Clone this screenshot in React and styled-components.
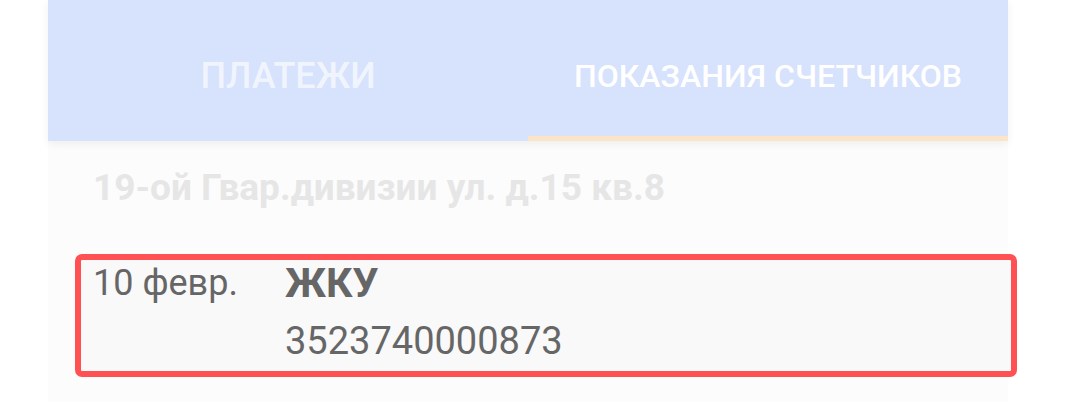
import React from "react";
import styled, { createGlobalStyle } from "styled-components";

const GlobalStyle = createGlobalStyle`
  body {
    margin: 0;
    background: #ffffff;
    font-family: Roboto, "Liberation Sans", sans-serif;
  }
`;

const tabs = [
  { id: "payments", label: "ПЛАТЕЖИ" },
  { id: "meters", label: "ПОКАЗАНИЯ СЧЕТЧИКОВ" },
];

const App = () => {
  const active = "meters";
  return (
    <>
      <GlobalStyle />
      <Panel>
        <TabBar>
          {tabs.map((tab) => (
            <Tab key={tab.id} active={tab.id === active}>
              {tab.label}
            </Tab>
          ))}
        </TabBar>
        <Content>
          <Address>19-ой Гвар.дивизии ул. д.15 кв.8</Address>
          <Card>
            <Date>10 февр.</Date>
            <Details>
              <Title>ЖКУ</Title>
              <Account>3523740000873</Account>
            </Details>
          </Card>
        </Content>
      </Panel>
    </>
  );
};

export default App;

const Panel = styled.div`
  width: 960px;
  margin-left: 48px;
`;

const TabBar = styled.div`
  position: relative;
  z-index: 1;
  display: grid;
  grid-template-columns: 1fr 1fr;
  height: 141px;
  background: #d7e2fc;
  box-shadow: 0 3px 8px rgba(0, 0, 0, 0.06);
`;

const Tab = styled.div`
  display: flex;
  align-items: center;
  justify-content: center;
  padding-top: 15px;
  box-sizing: border-box;
  font-weight: 500;
  font-size: ${(p) => (p.active ? "32px" : "36px")};
  color: ${(p) => (p.active ? "#ffffff" : "rgba(255, 255, 255, 0.65)")};
  border-bottom: 5px solid ${(p) => (p.active ? "#fde4c6" : "transparent")};
`;

const Content = styled.div`
  height: 261px;
  background: #fcfcfc;
  padding-top: 26px;
  box-sizing: border-box;
`;

const Address = styled.div`
  padding-left: 45px;
  font-size: 37px;
  line-height: 42px;
  font-weight: 700;
  color: #e6e6e6;
`;

const Card = styled.div`
  display: grid;
  grid-template-columns: 192px 1fr;
  width: 942px;
  margin: 45px 0 0 27px;
  padding: 2px 12px 9px;
  box-sizing: border-box;
  border: 6px solid #ff5154;
  border-radius: 7px;
  background: #f9f9f9;
  color: #666666;
  font-size: 36px;
  line-height: 42px;
`;

const Date = styled.div``;

const Details = styled.div`
  display: flex;
  flex-direction: column;
  gap: 16px;
`;

const Title = styled.div`
  font-size: 41px;
  font-weight: 700;
`;

const Account = styled.div`
  font-size: 38px;
`;
